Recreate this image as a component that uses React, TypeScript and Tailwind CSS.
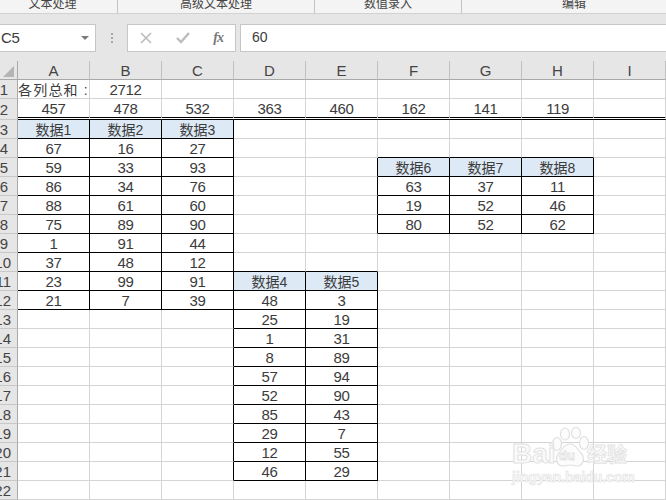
import React from "react";

const columns = ["A", "B", "C", "D", "E", "F", "G", "H", "I"];
const ROWS = 22;

// row/col are 1-based spreadsheet positions
type Block = { row: number; col: number; head: string[]; data: number[][] };

const blocks: Block[] = [
	{
		row: 3,
		col: 1,
		head: ["数据1", "数据2", "数据3"],
		data: [
			[67, 16, 27],
			[59, 33, 93],
			[86, 34, 76],
			[88, 61, 60],
			[75, 89, 90],
			[1, 91, 44],
			[37, 48, 12],
			[23, 99, 91],
			[21, 7, 39],
		],
	},
	{
		row: 5,
		col: 6,
		head: ["数据6", "数据7", "数据8"],
		data: [
			[63, 37, 11],
			[19, 52, 46],
			[80, 52, 62],
		],
	},
	{
		row: 11,
		col: 4,
		head: ["数据4", "数据5"],
		data: [
			[48, 3],
			[25, 19],
			[1, 31],
			[8, 89],
			[57, 94],
			[52, 90],
			[85, 43],
			[29, 7],
			[12, 55],
			[46, 29],
		],
	},
];

const totals = [457, 478, 532, 363, 460, 162, 141, 119];

function lookup(row: number, col: number) {
	for (const b of blocks) {
		const r = row - b.row;
		const c = col - b.col;
		if (r < 0 || c < 0 || c >= b.head.length || r > b.data.length) continue;
		if (r === 0) return { text: b.head[c], head: true };
		return { text: String(b.data[r - 1][c]), head: false };
	}
	return null;
}

function Cell({ row, col }: { row: number; col: number }) {
	const own = lookup(row, col);
	const blackRight = own || lookup(row, col + 1);
	const blackBottom = own || lookup(row + 1, col);
	let text = own ? own.text : "";
	if (row === 2 && totals[col - 1]) text = String(totals[col - 1]);
	if (row === 1 && col === 2) text = "2712";

	if (row === 1 && col === 1) {
		return (
			<div className="flex h-[19px] items-center whitespace-nowrap border-r border-b border-[#d4d4d4] pt-[3px] text-[14px] tracking-[1.2px] text-[#3c3c3c]">
				各列总和
				<span className="ml-[5px]">:</span>
			</div>
		);
	}

	return (
		<div
			className={`flex items-center justify-center pt-[3px] text-[#3c3c3c] border-r ${
				own && own.head ? "text-[14px]" : "text-[15px] tracking-[-0.4px]"
			} ${
				row === 2 ? "h-[21px] border-b-[3px] border-double border-b-black" : "h-[19px] border-b"
			} ${blackRight ? "border-r-black" : "border-r-[#d4d4d4]"} ${
				row !== 2 && (blackBottom ? "border-b-black" : "border-b-[#d4d4d4]")
			} ${own && own.head ? "bg-[#dde9f5]" : "bg-white"}`}
		>
			{text}
		</div>
	);
}

export default function App() {
	const rows = Array.from({ length: ROWS }, (_, i) => i + 1);

	return (
		<div className="relative flex h-[500px] w-[666px] flex-col overflow-hidden bg-white font-['Liberation_Sans','Noto_Sans_CJK_SC',sans-serif] text-[#3c3c3c]">
			{/* ribbon group labels, cut off by the crop */}
			<div className="flex h-[14px] overflow-hidden border-b border-[#d2d2d2] bg-[#f4f4f4] text-[12px] leading-[9px] text-[#444]">
				<div className="w-[118px] border-r border-[#c4c4c4] pr-[12px] text-center">文本处理</div>
				<div className="w-[197px] border-r border-[#c4c4c4] text-center">高级文本处理</div>
				<div className="w-[147px] border-r border-[#c4c4c4] text-center">数值录入</div>
				<div className="flex-1 pl-[20px] text-center">编辑</div>
			</div>

			{/* formula bar */}
			<div className="flex h-[48px] items-start bg-[#e6e6e6] pt-[10px]">
				<div className="flex h-[28px] w-[96px] items-center justify-between border-y border-r border-[#c6c6c6] bg-white pl-[1px] pr-[6px] text-[15px] tracking-[-0.4px]">
					C5
					<span className="h-0 w-0 border-x-[4px] border-t-[4px] border-x-transparent border-t-[#7a7a7a]" />
				</div>
				<div className="flex h-[28px] w-[31px] flex-col items-center justify-center gap-[2px]">
					<span className="size-[2px] bg-[#a8a8a8]" />
					<span className="size-[2px] bg-[#a8a8a8]" />
					<span className="size-[2px] bg-[#a8a8a8]" />
				</div>
				<div className="flex h-[28px] w-[109px] items-center justify-between border border-[#c6c6c6] bg-white pl-[12px] pr-[12px]">
					<svg width="12" height="12" viewBox="0 0 12 12" stroke="#bcbcbc" strokeWidth="1.6" fill="none">
						<path d="M1 1l10 10M11 1L1 11" />
					</svg>
					<svg width="14" height="12" viewBox="0 0 14 12" stroke="#bcbcbc" strokeWidth="2.4" fill="none">
						<path d="M1 6l4 4 8-9" />
					</svg>
					<span className="font-['Liberation_Serif',serif] text-[14px] font-bold italic tracking-[-1px] text-[#777]">
						fx
					</span>
				</div>
				<div className="ml-[4px] flex h-[28px] flex-1 items-center border-y border-l border-[#c6c6c6] bg-white pl-[11px] text-[14px]">
					60
				</div>
			</div>

			{/* sheet */}
			<div className="grid grid-cols-[18px_repeat(9,72px)]">
				<div className="relative h-[19px] border-b border-r border-[#a8a8a8] bg-[#e6e6e6]">
					<span className="absolute bottom-[2px] right-[3px] h-0 w-0 border-b-[11px] border-l-[11px] border-b-[#b4b4b4] border-l-transparent" />
				</div>
				{columns.map((c) => (
					<div
						key={c}
						className="flex h-[19px] items-center justify-center border-b border-r border-b-[#a8a8a8] border-r-[#c0c0c0] bg-[#e6e6e6] pt-[2px] text-[15px] text-[#444]"
					>
						{c}
					</div>
				))}

				{rows.map((row) => (
					<React.Fragment key={row}>
						<div
							className={`flex items-center justify-end overflow-hidden border-r border-b border-r-[#a8a8a8] border-b-[#c8c8c8] bg-[#e6e6e6] pt-[3px] text-[15px] text-[#444] ${
								row === 2 ? "h-[21px]" : "h-[19px]"
							} ${row > 9 ? "pr-[6px]" : "pr-[9px]"}`}
						>
							<span className="whitespace-nowrap">{row}</span>
						</div>
						{columns.map((_, i) => (
							<Cell key={i} row={row} col={i + 1} />
						))}
					</React.Fragment>
				))}
			</div>

			{/* baidu watermark */}
			<div className="absolute left-[510px] top-[426px] h-[60px] w-[120px] font-bold text-white">
				<svg width="38" height="42" viewBox="0 0 38 42" className="absolute left-[41px] top-[1px]" fill="#fcfcfc" stroke="#e0e0e0" strokeWidth="1.2">
					<ellipse cx="6" cy="17" rx="4.5" ry="6.5" />
					<ellipse cx="14" cy="7" rx="4.5" ry="6" />
					<ellipse cx="25" cy="6" rx="4.5" ry="5.5" />
					<ellipse cx="33" cy="16" rx="4.5" ry="6.5" />
					<path d="M19 17c6 0 7 5 11 9 4 4 3 13-4 13-3 0-4-1-7-1s-4 1-7 1c-7 0-8-9-4-13 4-4 5-9 11-9z" />
				</svg>
				<span className="absolute left-[2px] top-[12px] text-[28px] leading-[32px] text-[#fbfbfb] [-webkit-text-stroke:1px_#e2e2e2]">
					Bai
				</span>
				<span className="absolute left-[49px] top-[21px] text-[13px] leading-[18px] text-[#fbfbfb] [-webkit-text-stroke:0.8px_#e0e0e0]">
					du
				</span>
				<span className="absolute left-[77px] top-[16px] text-[20px] leading-[26px] text-[#fbfbfb] [-webkit-text-stroke:0.8px_#e2e2e2]">
					经验
				</span>
				<span className="absolute left-[2px] top-[43px] whitespace-nowrap text-[14px] leading-[16px] text-[#fbfbfb] [-webkit-text-stroke:0.7px_#e4e4e4]">
					jingyan.baidu.com
				</span>
			</div>
		</div>
	);
}
